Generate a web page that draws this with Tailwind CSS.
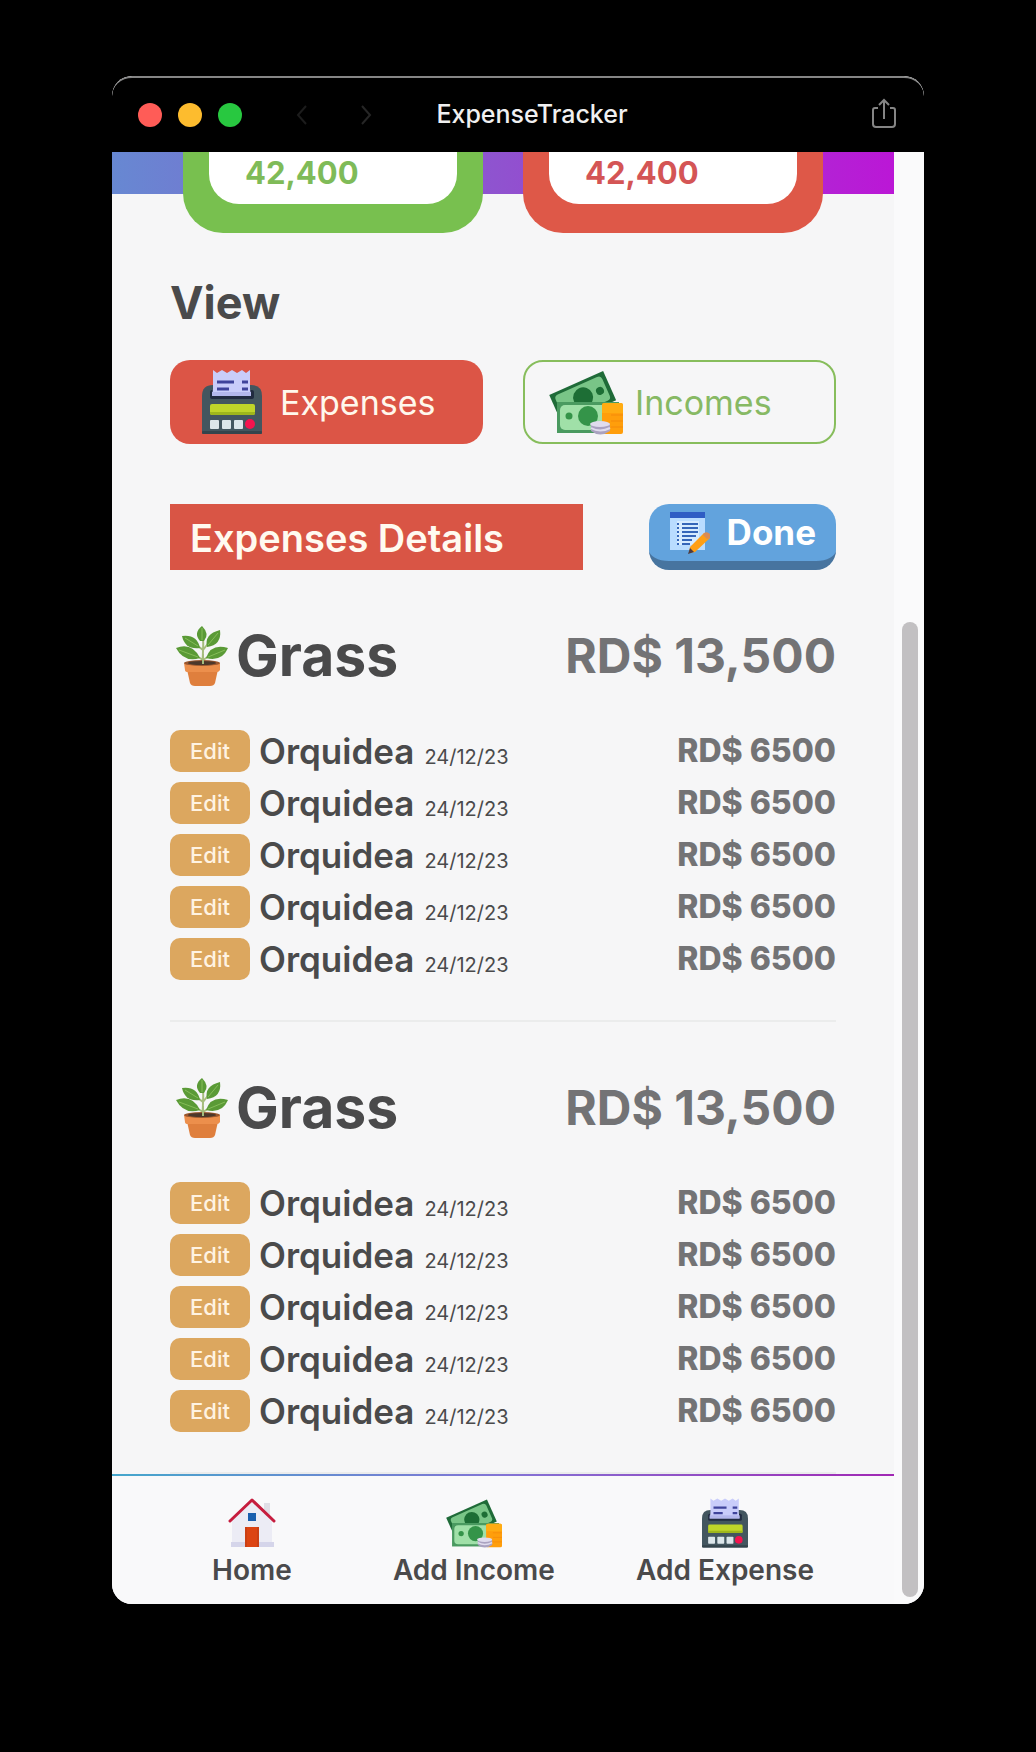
<!DOCTYPE html>
<html lang="en">
<head>
<meta charset="utf-8">
<meta name="viewport" content="width=device-width, initial-scale=1">
<title>ExpenseTracker</title>
<script src="https://cdn.jsdelivr.net/npm/@tailwindcss/browser@4"></script>
</head>
<body class="min-h-screen bg-black px-28 pt-[76px] pb-[148px] font-[Inter,sans-serif] text-[#4a4a4b]">

<!-- Shared icons -->
<svg class="hidden" aria-hidden="true">
  <symbol id="register" viewBox="0 0 60 64">
    <path d="M0 62V26Q0 15 11 15H49Q60 15 60 26V62Q60 64 58 64H2Q0 64 0 62Z" fill="#43565f"/>
    <rect x="8" y="20" width="44" height="9" rx="2" fill="#212b40"/>
    <path d="M11 0L15 3L20 0L25 3L30 0L35 3L40 0L44 3L48 0V19L49 26H10L11 19Z" fill="#c9cdfa"/>
    <path d="M10 22H49L49 26H10Z" fill="#b3b7ec"/>
    <path d="M15 12H32M40 12H46M15 19H27M40 19H46" stroke="#3f449b" stroke-width="3"/>
    <rect x="8" y="34" width="45" height="11" rx="2" fill="#bfd529"/>
    <path d="M8 42H53V43Q53 45 51 45H10Q8 45 8 43Z" fill="#9eb61c"/>
    <g fill="#dce6ea"><rect x="8" y="50" width="9" height="9" rx="1"/><rect x="20" y="50" width="9" height="9" rx="1"/><rect x="32" y="50" width="9" height="9" rx="1"/></g>
    <circle cx="48" cy="54" r="5" fill="#f5134e"/>
    <rect y="61" width="60" height="3" rx="1" fill="#34444c"/>
  </symbol>
  <symbol id="cash" viewBox="0 0 74 66">
    <g transform="rotate(-24 32 26)">
      <rect x="3" y="13" width="59" height="32" fill="#1f6b38"/>
      <rect x="7" y="16" width="51" height="26" rx="4" fill="#79c587"/>
      <circle cx="33" cy="29" r="10" fill="#1d6e35"/>
      <circle cx="51" cy="30" r="4" fill="#1d6e35"/>
    </g>
    <rect x="8" y="33" width="62" height="31" fill="#4a9a60"/>
    <rect x="11" y="36" width="56" height="25" rx="5" fill="#a0e0a8"/>
    <circle cx="39" cy="47" r="10" fill="#349449"/>
    <circle cx="20" cy="47" r="3.500" fill="#349449"/>
    <rect x="53" y="34" width="21" height="31" rx="2" fill="#ff9e0b"/>
    <path d="M53 36Q53 34 56 34H72Q74 34 74 38V44H53Z" fill="#ffac12"/>
    <path d="M62 46H74M62 52H74M62 58H74" stroke="#f58a0b" stroke-width="1"/>
    <path d="M42 55Q51 50 61 55V62Q51 69 42 62Z" fill="#aaa2c0"/>
    <ellipse cx="51" cy="55" rx="10" ry="3" fill="#e0dced"/>
    <path d="M42 59Q51 64 61 59" stroke="#e0dced" stroke-width="2" fill="none"/>
  </symbol>
  <symbol id="plant" viewBox="0 0 52 60">
    <path d="M27 38C26 28 28 22 27 12M27 34L16 27M27 34L38 27M27 24L18 17M27 24L34 15" stroke="#a6bd7d" stroke-width="2" fill="none"/>
    <g fill="#5a9a36">
      <path d="M24 15Q17 7 26 0Q34 8 28 15Z"/>
      <path d="M24 22Q9 24 6 10Q21 8 24 22Z"/>
      <path d="M31 21Q28 8 44 4Q46 19 31 21Z"/>
      <path d="M24 32Q8 37 0 22Q16 16 24 32Z"/>
      <path d="M30 32Q35 17 52 22Q46 36 30 32Z"/>
    </g>
    <path d="M26 2V14M9 12L22 20M42 7L32 19M3 24L22 31M49 24L32 31" stroke="#85bd58" stroke-width="1"/>
    <path d="M10 39H43L39 57Q38 60 34 60H19Q15 60 14 57Z" fill="#df7f3d"/>
    <path d="M8 37H44V44Q43 46 41 46H12Q9 46 9 44Z" fill="#ec8f4c"/>
    <ellipse cx="26" cy="37" rx="18" ry="3" fill="#9a572f"/>
    <ellipse cx="26" cy="37" rx="14" ry="2" fill="#4c382b"/>
    <path d="M27 38V28" stroke="#a6bd7d" stroke-width="2"/>
  </symbol>
  <symbol id="memo" viewBox="0 0 42 42">
    <rect x="1" y="2" width="35" height="36" fill="#b9dcff"/>
    <rect x="1" width="35" height="6" fill="#2f5dc4"/>
    <rect x="8" y="9" width="22" height="24" fill="#d6ebff"/>
    <path d="M8 12H10M13 12H29M8 16H10M13 16H29M8 20H10M13 20H29M8 24H10M13 24H27M8 28H10M13 28H23M8 32H10M13 32H21" stroke="#3566b9" stroke-width="2"/>
    <path d="M20 41L21 35L35 21L41 26L26 40Z" fill="#ff9f14"/>
    <path d="M35 21Q38 19 41 22L41 26L38 27L34 23Z" fill="#d98c55"/>
    <path d="M19 42L21 36L25 40Z" fill="#4d3a3f"/>
  </symbol>
  <symbol id="house" viewBox="0 0 48 50">
    <path d="M36 5H42V18H36Z" fill="#e0dfe6"/>
    <path d="M24 4L44 23V49H4V23Z" fill="#ececf5"/>
    <path d="M3 44H17V49H3ZM31 44H46V49H31Z" fill="#d5d5ea"/>
    <path d="M2 23L24 2L46 23" fill="none" stroke="#c61d3e" stroke-width="3" stroke-linecap="round" stroke-linejoin="round"/>
    <rect x="20" y="15" width="8" height="8" fill="#1a5fae"/>
    <rect x="17" y="29" width="14" height="20" fill="#dc4413"/>
    <path d="M18 29V49M30 29V49" stroke="#b83a16" stroke-width="1"/>
  </symbol>
</svg>

<div class="overflow-hidden rounded-[20px] bg-[#f6f6f7]">

  <header class="grid h-[76px] grid-cols-[1fr_auto_1fr] items-center rounded-t-[20px] border-t-2 border-[#858585] bg-black px-[26px]">
    <div class="flex items-center gap-4">
      <span class="size-6 rounded-full bg-[#ff5c57]"></span>
      <span class="size-6 rounded-full bg-[#fdbc2e]"></span>
      <span class="size-6 rounded-full bg-[#28c840]"></span>
      <button aria-label="Back" class="ml-9"><svg class="h-6 w-4" viewBox="0 0 16 24" fill="none" stroke="#1c1c1c" stroke-width="2"><path d="M12 3L4 12L12 21"/></svg></button>
      <button aria-label="Forward" class="ml-8"><svg class="h-6 w-4" viewBox="0 0 16 24" fill="none" stroke="#262626" stroke-width="2"><path d="M4 3L12 12L4 21"/></svg></button>
    </div>
    <h1 class="pl-7 text-[25px] font-medium text-[#f0f0f0]">ExpenseTracker</h1>
    <button aria-label="Share" class="justify-self-end"><svg class="mb-1 h-8 w-7" viewBox="0 0 28 32" fill="none" stroke="#858585" stroke-width="2"><path d="M8 11H5Q3 11 3 13V27Q3 30 6 30H22Q25 30 25 27V13Q25 11 23 11H20M14 22V3M9 8L14 3L19 8"/></svg></button>
  </header>

  <div class="flex">
    <div class="min-w-0 flex-1">

      <section class="grid grid-cols-2 gap-10 bg-[linear-gradient(90deg,#6788d2,#9052cf_50%,#bb17d6)] bg-[length:100%_42px] bg-no-repeat px-[71px]" aria-label="Totals">
        <div class="rounded-b-[40px] bg-[#78c04f] px-[26px] pb-[29px]">
          <p class="h-[52px] rounded-b-[30px] bg-white px-9 text-[31px] leading-[42px] font-bold text-[#7fbb58]">42,400</p>
        </div>
        <div class="rounded-b-[40px] bg-[#de5848] px-[26px] pb-[29px]">
          <p class="h-[52px] rounded-b-[30px] bg-white px-9 text-[31px] leading-[42px] font-bold text-[#d45555]">42,400</p>
        </div>
      </section>

      <main class="px-[58px]">
        <h2 class="pt-10 text-[45px] leading-[60px] font-bold">View</h2>

        <div class="mt-[27px] grid grid-cols-2 gap-10">
          <button class="flex h-[84px] items-center rounded-[20px] bg-[#dc5546] pl-8 text-[34px] text-[#fff8ec]">
            <svg class="mr-[18px] h-16 w-[60px]" aria-hidden="true"><use href="#register"/></svg>Expenses
          </button>
          <button class="flex h-[84px] items-center rounded-[20px] border-2 border-[#87bd5c] pl-6 text-[34px] text-[#87b964]">
            <svg class="mr-3 h-[66px] w-[74px]" aria-hidden="true"><use href="#cash"/></svg>Incomes
          </button>
        </div>

        <div class="mt-[60px] flex justify-between">
          <h2 class="h-[66px] w-[62%] bg-[#d95545] pl-5 text-[38px] leading-[68px] font-semibold text-[#fffaf0]">Expenses Details</h2>
          <button class="flex h-[66px] items-center rounded-[20px] border-b-[9px] border-[#47749f] bg-[#62a3dd] px-5 text-[35px] font-bold text-white">
            <svg class="mr-4 size-[42px]" aria-hidden="true"><use href="#memo"/></svg>Done
          </button>
        </div>

        <div id="groups"></div>
      </main>

      <nav class="border-t-2 bg-[#f9f9fa] [border-image:linear-gradient(90deg,#45a7cc,#8374d5_50%,#a128b4)_1]">
        <ul class="flex h-32 items-start justify-between pt-[22px] pr-20 pl-[100px] text-[28px] leading-9 font-semibold">
          <li class="pr-5"><a href="#home" class="flex flex-col items-center gap-1"><svg class="h-[50px] w-12" aria-hidden="true"><use href="#house"/></svg>Home</a></li>
          <li><a href="#income" class="flex flex-col items-center gap-1"><svg class="h-[50px] w-14" aria-hidden="true"><use href="#cash"/></svg>Add Income</a></li>
          <li><a href="#expense" class="flex flex-col items-center gap-1"><svg class="h-[50px] w-[46px]" aria-hidden="true"><use href="#register"/></svg>Add Expense</a></li>
        </ul>
      </nav>
    </div>

    <!-- Scroll track -->
    <div class="flex w-[30px] bg-[#fafafb] pt-[470px] pr-[6px] pb-[7px] pl-2"><div class="flex-1 rounded-full bg-[#c2c0c2]"></div></div>
  </div>
</div>

<script>
  const groups = [
    { name: 'Grass', total: '13,500', items: Array(5).fill({ name: 'Orquidea', date: '24/12/23', amount: 6500 }) },
    { name: 'Grass', total: '13,500', items: Array(5).fill({ name: 'Orquidea', date: '24/12/23', amount: 6500 }) }
  ];
  const row = i => `
    <li class="flex h-[42px] items-center">
      <button class="h-[42px] w-20 rounded-[10px] bg-[#dca75f] text-[22px] leading-[42px] font-medium text-[#fff3e2]">Edit</button>
      <span class="ml-[9px] flex items-baseline gap-[10px]"><span class="text-[35px] leading-[42px] font-semibold">${i.name}</span><span class="text-[20px]">${i.date}</span></span>
      <span class="ml-auto text-[32px] leading-[44px] font-extrabold text-[#737375]">RD$ ${i.amount}</span>
    </li>`;
  document.getElementById('groups').innerHTML = groups.map(g => `
    <section class="border-b-2 border-[#ebecec] pt-[50px] pb-10">
      <div class="flex h-[72px] items-center">
        <svg class="mr-2 ml-[6px] h-[60px] w-[52px]" aria-hidden="true"><use href="#plant"/></svg>
        <h3 class="text-[57px] leading-[74px] font-bold">${g.name}</h3>
        <span class="ml-auto text-[48px] leading-[72px] font-bold text-[#737375]">RD$ ${g.total}</span>
      </div>
      <ul class="mt-[38px] flex flex-col gap-[10px]">${g.items.map(row).join('')}</ul>
    </section>`).join('');
</script>
</body>
</html>
